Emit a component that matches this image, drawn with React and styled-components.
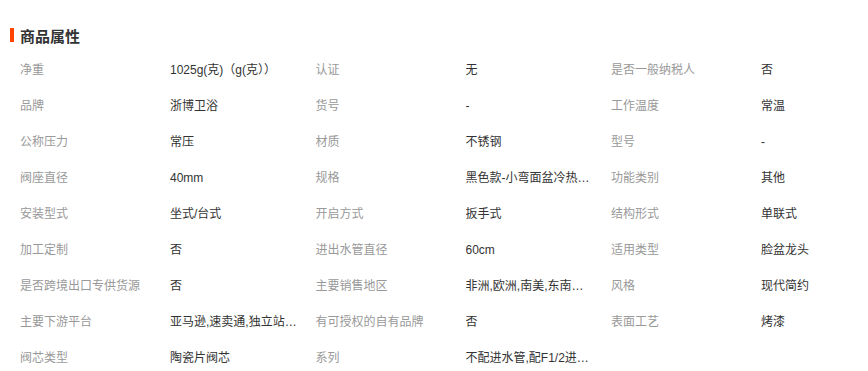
import styled, { createGlobalStyle } from "styled-components";

const GlobalStyle = createGlobalStyle`
  body {
    margin: 0;
    background: #fff;
    font-family: "Liberation Sans", "Noto Sans CJK SC", sans-serif;
  }
`;

const Container = styled.div`
  width: 868px;
  height: 371px;
  overflow: hidden;
  background: #fff;
  padding-top: 25px;
  box-sizing: border-box;
`;

const Title = styled.h3`
  margin: 0 0 7px 10px;
  display: flex;
  align-items: center;
  gap: 6px;
  height: 20px;
  font-size: 15px;
  font-weight: bold;
  color: #333;
  &::before {
    content: "";
    width: 4px;
    height: 14px;
    background: #ff4400;
  }
`;

const Grid = styled.div`
  display: grid;
  grid-template-columns: repeat(3, 150px 145.5px);
  padding-left: 20px;
  width: max-content;
`;

const Cell = styled.div`
  height: 36px;
  line-height: 36px;
  font-size: 12px;
  white-space: nowrap;
  overflow: hidden;
  text-overflow: ellipsis;
  color: ${(p) => (p.$label ? "#999" : "#333")};
  max-width: ${(p) => (p.$label ? "150px" : "128px")};
`;

const attrs = [
  ["净重", "1025g(克)（g(克））"],
  ["认证", "无"],
  ["是否一般纳税人", "否"],
  ["品牌", "浙博卫浴"],
  ["货号", "-"],
  ["工作温度", "常温"],
  ["公称压力", "常压"],
  ["材质", "不锈钢"],
  ["型号", "-"],
  ["阀座直径", "40mm"],
  ["规格", "黑色款-小弯面盆冷热水龙头"],
  ["功能类别", "其他"],
  ["安装型式", "坐式/台式"],
  ["开启方式", "扳手式"],
  ["结构形式", "单联式"],
  ["加工定制", "否"],
  ["进出水管直径", "60cm"],
  ["适用类型", "脸盆龙头"],
  ["是否跨境出口专供货源", "否"],
  ["主要销售地区", "非洲,欧洲,南美,东南亚,北美"],
  ["风格", "现代简约"],
  ["主要下游平台", "亚马逊,速卖通,独立站,ebay"],
  ["有可授权的自有品牌", "否"],
  ["表面工艺", "烤漆"],
  ["阀芯类型", "陶瓷片阀芯"],
  ["系列", "不配进水管,配F1/2进水管"],
];

const App = () => (
  <Container>
    <GlobalStyle />
    <Title>商品属性</Title>
    <Grid>
      {attrs.map(([k, v]) => [
        <Cell key={k + "-k"} $label>
          {k}
        </Cell>,
        <Cell key={k + "-v"} title={v}>
          {v}
        </Cell>,
      ])}
    </Grid>
  </Container>
);

export default App;
